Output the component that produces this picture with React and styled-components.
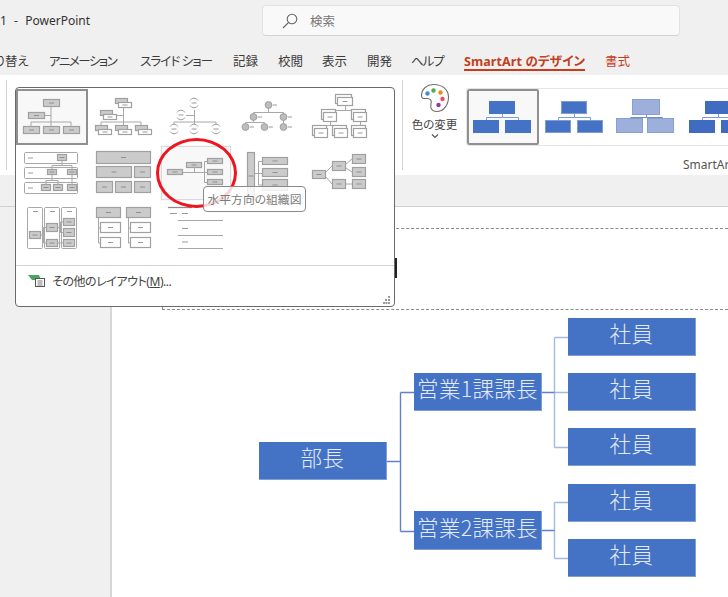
import React from 'react';
import styled, { createGlobalStyle } from 'styled-components';

const GlobalStyle = createGlobalStyle`
  html, body {
    margin: 0;
    padding: 0;
    background: #f0f0f0;
  }
  body {
    font-family: "Noto Sans", "Noto Sans CJK JP", sans-serif;
    font-feature-settings: "palt";
  }
`;

const Page = styled.div`
  position: relative;
  width: 728px;
  height: 597px;
  overflow: hidden;
  background: #f0f0f0;
  display: flex;
  flex-direction: column;
`;

const TitleBar = styled.div`
  height: 42px;
  display: flex;
  align-items: flex-start;
  flex: none;
`;

const AppTitle = styled.div`
  width: 262px;
  flex: none;
  margin-top: 12px;
  font-size: 12px;
  line-height: 18px;
  word-spacing: 0.5px;
  color: #333;
  white-space: pre;
`;

const SearchBox = styled.div`
  margin-top: 5px;
  width: 418px;
  height: 31px;
  box-sizing: border-box;
  background: #f9f9f9;
  border: 1px solid #e2e2e2;
  border-bottom-color: #d2d2d2;
  border-radius: 4px;
  display: flex;
  align-items: center;
  padding-left: 19px;
  gap: 12px;
  font-size: 12.5px;
  color: #777;
`;

const Tabs = styled.div`
  height: 33px;
  flex: none;
  display: flex;
  margin-left: -18px;
  font-size: 12.5px;
  color: #3c3c3c;
`;

const Tab = styled.div`
  width: ${p => p.$w}px;
  flex: none;
  box-sizing: border-box;
  padding-top: 11px;
  white-space: nowrap;
  letter-spacing: ${p => p.$squeeze || 0}px;
  color: ${p => (p.$accent ? '#c43e1c' : 'inherit')};
  font-weight: ${p => (p.$active ? 700 : 400)};
`;

const TabLabel = styled.div`
  width: fit-content;
  height: 18px;
  line-height: 18px;
  box-sizing: border-box;
  border-bottom: ${p => (p.$active ? '2px solid #c43e1c' : 'none')};
`;

const Ribbon = styled.div`
  height: 100px;
  flex: none;
  background: #fff;
  display: flex;
`;

const RibbonDivider = styled.div`
  width: 1px;
  height: 90px;
  margin: 5px 0 0 ${p => p.$left}px;
  background: #d4d4d4;
  flex: none;
`;

const ColorButton = styled.div`
  width: 63px;
  flex: none;
  display: flex;
  flex-direction: column;
  align-items: center;
  padding-top: 8px;
  font-size: 11.5px;
  line-height: 16px;
  color: #444;
`;

const ColorLabel = styled.div`
  margin-top: 4px;
  white-space: nowrap;
`;

const GalleryColumn = styled.div`
  flex: 1;
  min-width: 0;
  padding-top: 13px;
  display: flex;
  flex-direction: column;
`;

const RibbonGallery = styled.div`
  height: 58px;
  box-sizing: border-box;
  border: 1px solid #e4e4e4;
  border-right: none;
  border-radius: 3px 0 0 3px;
  display: flex;
  overflow: hidden;
`;

const RibbonCell = styled.div`
  width: 72px;
  height: 56px;
  flex: none;
  box-sizing: border-box;
  outline: ${p => (p.$selected ? '2px solid #909090' : 'none')};
  outline-offset: -2px;
  background: ${p => (p.$selected ? '#f8f8f8' : '#fff')};
  border-radius: 2px;
  svg { display: block; }
`;

const GroupLabel = styled.div`
  padding: 11px 0 0 217px;
  font-size: 12px;
  line-height: 16px;
  color: #555;
`;

const ViewStrip = styled.div`
  height: 31px;
  flex: none;
  box-sizing: content-box;
  border-bottom: 1px solid #d0d0d0;
`;

const Workspace = styled.div`
  flex: 1;
  display: flex;
`;

const ThumbPane = styled.div`
  width: 110px;
  flex: none;
  border-right: 2px solid #d6d6d6;
`;

const Slide = styled.div`
  flex: 1;
  position: relative;
  background: #fff;
`;

const TitlePlaceholder = styled.div`
  position: absolute;
  left: 50px;
  right: 0;
  top: 21px;
  height: 80px;
  border-top: 1px dashed #8a8a8a;
  border-bottom: 1px dashed #8a8a8a;
  border-left: 1px dashed #8a8a8a;
`;

const TextCaret = styled.div`
  position: absolute;
  left: 232px;
  top: 29px;
  width: 2px;
  height: 20px;
  background: #222;
`;

const Connectors = styled.svg`
  position: absolute;
  left: 0;
  top: 0;
`;

const OrgNode = styled.div`
  position: absolute;
  left: ${p => p.$x - 112}px;
  top: ${p => p.$y - 207}px;
  width: 128px;
  height: ${p => p.$h}px;
  box-sizing: border-box;
  padding-bottom: 8px;
  background: #4472c4;
  border: 1px solid #7e9ed8;
  border-width: 0 1px 1px 0;
  color: #e4ebf8;
  font-family: "Noto Sans CJK JP", sans-serif;
  font-feature-settings: normal;
  font-size: 21.5px;
  font-weight: 300;
  letter-spacing: ${p => p.$spacing}px;
  display: flex;
  align-items: center;
  justify-content: center;
  white-space: nowrap;
`;

const LayoutPopup = styled.div`
  position: absolute;
  left: 15px;
  top: 87px;
  width: 380px;
  height: 220px;
  box-sizing: border-box;
  background: #fff;
  border: 1px solid #6a6a6a;
  border-radius: 4px;
  display: flex;
  flex-direction: column;
`;

const LayoutGrid = styled.div`
  display: grid;
  grid-template-columns: repeat(5, 72px);
  grid-auto-rows: 56px;
  padding: 1px 0 0 0;
  height: 177px;
  box-sizing: border-box;
`;

const LayoutCell = styled.div`
  box-sizing: border-box;
  position: relative;
  background: ${p => (p.$hover ? '#f8f8f8' : p.$selected ? '#f8f8f8' : 'transparent')};
  outline: ${p => (p.$selected ? '2px solid #909090' : p.$hover ? '1px solid #dadada' : 'none')};
  outline-offset: -2px;
  svg { display: block; }
`;

const PopupFooter = styled.div`
  flex: none;
  border-top: 1px solid #d2d2d2;
  height: 41px;
  box-sizing: border-box;
  position: relative;
  display: flex;
  align-items: center;
  padding: 0 0 11px 12px;
  gap: 7px;
  font-size: 12px;
  letter-spacing: -0.45px;
  color: #444;
`;

const Mnemonic = styled.span`
  text-decoration: underline;
`;

const ResizeGrip = styled.svg`
  position: absolute;
  right: 3px;
  bottom: 2px;
`;

const Tooltip = styled.div`
  position: absolute;
  left: 203px;
  top: 186px;
  width: 103px;
  height: 26px;
  box-sizing: border-box;
  background: rgba(255, 255, 255, 0.82);
  border: 1px solid #8a8a8a;
  border-radius: 4px;
  font-size: 11.8px;
  line-height: 24px;
  text-align: center;
  color: #7c7c7c;
  white-space: nowrap;
`;

const RedRing = styled.div`
  position: absolute;
  left: 156px;
  top: 138px;
  width: 81px;
  height: 70px;
  box-sizing: border-box;
  border: 3px solid #f0141e;
  border-radius: 50%;
`;

/* --- drawings --- */

const GRAY = '#cbcbcb';
const EDGE = '#a0a0a0';
const LINE = '#a8a8a8';
const DASH = '#808080';

const Thumb = ({ x, y, children }) => (
  <svg width="72" height="56" viewBox={`${x} ${y} 72 56`}>{children}</svg>
);

const Box = ({ x1, y1, x2, y2, white, noDash }) => {
  const cx = (x1 + x2) / 2;
  const cy = (y1 + y2) / 2;
  return (
    <g>
      <rect x={x1 + 0.5} y={y1 + 0.5} width={x2 - x1 - 1} height={y2 - y1 - 1} fill={white ? '#fff' : GRAY} stroke={EDGE} strokeWidth="1.200" />
      {!noDash && <line x1={cx - 2.5} x2={cx + 2.5} y1={cy} y2={cy} stroke={DASH} strokeWidth="0.8" />}
    </g>
  );
};

const Lines = ({ d, color = LINE, width = 1 }) => <path d={d} fill="none" stroke={color} strokeWidth={width} />;

const Circle = ({ cx, cy, r = 3.4 }) => (
  <g>
    <circle cx={cx} cy={cy} r={r} fill="#bdbdbd" stroke={EDGE} />
    <line x1={cx + r + 1} x2={cx + r + 5} y1={cy} y2={cy} stroke={DASH} strokeWidth="0.8" />
  </g>
);

const ArcNode = ({ cx, cy }) => (
  <g>
    <path d={`M${cx - 4} ${cy - 2.5}A4.6 4.6 0 0 1 ${cx + 4} ${cy - 2.5}M${cx - 4} ${cy + 2.5}A4.6 4.6 0 0 0 ${cx + 4} ${cy + 2.5}`} fill="none" stroke={EDGE} />
    <line x1={cx - 2.5} x2={cx + 2.5} y1={cy} y2={cy} stroke={DASH} strokeWidth="0.8" />
  </g>
);

const PairBox = ({ x, y, w = 13, h = 6 }) => (
  <g>
    <Box x1={x} y1={y} x2={x + w} y2={y + h} noDash />
    <Box x1={x + 3} y1={y + 4} x2={x + w + 4} y2={y + h + 4} white />
  </g>
);

const StackBox = ({ x, y, w = 15, h = 10 }) => (
  <g>
    <rect x={x - 1.5} y={y - 2.5} width={w} height={h} fill="#fff" stroke={EDGE} strokeWidth="1.200" />
    <Box x1={x} y1={y} x2={x + w} y2={y + h} white />
  </g>
);

const layouts = [
  <Thumb x={16} y={89} key="a">
    <Lines d="M51 107V122M45 115.5H51M31 126V122H71V126M51 122V126" />
    <Box x1={43} y1={99} x2={60} y2={107} />
    <Box x1={28} y1={112} x2={45} y2={119} />
    <Box x1={23} y1={126} x2={40} y2={134} />
    <Box x1={43} y1={126} x2={60} y2={134} />
    <Box x1={63} y1={126} x2={80} y2={134} />
  </Thumb>,
  <Thumb x={88} y={89} key="b">
    <Lines d="M123.500 106V122M114 115.500H123.500M101 125V122H141V125M123.500 122V125" />
    <PairBox x={115} y={98} />
    <PairBox x={100} y={110} />
    <PairBox x={95} y={125} />
    <PairBox x={115} y={125} />
    <PairBox x={135} y={125} />
  </Thumb>,
  <Thumb x={160} y={89} key="c">
    <Lines d="M194.500 110V122M186 115.500H194.500M174 124V122H216V124M194.500 122V124" />
    <ArcNode cx={194} cy={103} />
    <ArcNode cx={181} cy={115} />
    <ArcNode cx={174} cy={129} />
    <ArcNode cx={194} cy={129} />
    <ArcNode cx={216} cy={129} />
  </Thumb>,
  <Thumb x={232} y={89} key="d">
    <Lines d="M268.500 108V112.500M253.500 117V112.500H283.500V127M245.500 127V122.500H264.500V127M253.500 117V122.500" />
    <Circle cx={268.500} cy={105} />
    <Circle cx={253.500} cy={117} />
    <Circle cx={283.500} cy={117} />
    <Circle cx={245.500} cy={127} />
    <Circle cx={264.500} cy={127} />
    <Circle cx={283.500} cy={127} />
  </Thumb>,
  <Thumb x={304} y={89} key="e">
    <Lines d="M345.500 106V110.500M330.500 112V110.500H360.500V112M330.500 122V125.500M321 128V125.500H340V128M360.500 122V128" />
    <StackBox x={337} y={97} w={16} h={9} />
    <StackBox x={323} y={112} w={14} />
    <StackBox x={353} y={112} w={14} />
    <StackBox x={314} y={128} w={14} />
    <StackBox x={334} y={128} w={14} />
    <StackBox x={353} y={128} w={14} />
  </Thumb>,
  <Thumb x={16} y={145} key="f">
    {[152, 167, 182].map(y => (
      <g key={y}>
        <rect x="24.500" y={y + 0.5} width="53" height="11" fill="#fff" stroke={LINE} rx="1" />
        <line x1="28" x2="33" y1={y + 6} y2={y + 6} stroke={DASH} strokeWidth="0.8" />
      </g>
    ))}
    <Lines d="M62 161V165.500M52 169V165.500H72V169M52 175V180.500M46 184V180.500H58V184M72 175V184" />
    <Box x1={57} y1={154} x2={67} y2={161} />
    <Box x1={47} y1={169} x2={57} y2={175} />
    <Box x1={67} y1={169} x2={77} y2={175} />
    <Box x1={41} y1={184} x2={51} y2={191} />
    <Box x1={53} y1={184} x2={63} y2={191} />
    <Box x1={67} y1={184} x2={77} y2={191} />
  </Thumb>,
  <Thumb x={88} y={145} key="g">
    <Box x1={96} y1={151} x2={151} y2={164} />
    <Box x1={96} y1={166} x2={132} y2={178} />
    <Box x1={134} y1={166} x2={151} y2={178} />
    <Box x1={96} y1={181} x2={113} y2={193} />
    <Box x1={115} y1={181} x2={132} y2={193} />
    <Box x1={134} y1={181} x2={151} y2={193} />
  </Thumb>,
  <Thumb x={160} y={145} key="h">
    <Lines d="M183 172.500H207M194.500 168V172.500M204.500 161.500V182.500M204.500 161.500H207M204.500 182.500H207" />
    <Box x1={167} y1={169} x2={183} y2={175} />
    <Box x1={186} y1={162} x2={202} y2={168} />
    <Box x1={207} y1={158} x2={223} y2={164} />
    <Box x1={207} y1={169} x2={223} y2={175} />
    <Box x1={207} y1={179} x2={223} y2={185} />
  </Thumb>,
  <Thumb x={232} y={145} key="i">
    <Lines d="M255 173.500H262M258.500 161.500V185M258.500 161.500H262M258.500 185H262" />
    <Box x1={247} y1={152} x2={255} y2={200} />
    <Box x1={262} y1={157} x2={288} y2={165} />
    <Box x1={262} y1={168} x2={288} y2={177} />
    <Box x1={262} y1={179} x2={288} y2={191} />
  </Thumb>,
  <Thumb x={304} y={145} key="j">
    <Lines d="M326 172L332 166M326 177L332 184M346 164L352 159M346 168L352 172M346 184H352" />
    <Box x1={312} y1={170} x2={326} y2={179} />
    <Box x1={332} y1={161} x2={346} y2={171} />
    <Box x1={332} y1={179} x2={346} y2={189} />
    <Box x1={352} y1={154} x2={366} y2={164} />
    <Box x1={352} y1={167} x2={366} y2={177} />
    <Box x1={352} y1={179} x2={366} y2={189} />
  </Thumb>,
  <Thumb x={16} y={201} key="k">
    {[27, 44, 61].map(x => (
      <g key={x}>
        <rect x={x + 0.5} y="207.500" width="15" height="41" fill="#fff" stroke={LINE} rx="1" />
        <line x1={x + 6} x2={x + 11} y1="211.500" y2="211.500" stroke={DASH} strokeWidth="0.8" />
      </g>
    ))}
    <Lines d="M41 235H43.500V227.500H46M43.500 235V243H46M58 227.500H60.500V222H63M60.500 227.500V232.500H63M58 243H63" />
    <Box x1={29} y1={231} x2={41} y2={239} />
    <Box x1={46} y1={223} x2={58} y2={232} />
    <Box x1={46} y1={239} x2={58} y2={247} />
    <Box x1={63} y1={218} x2={75} y2={226} />
    <Box x1={63} y1={228} x2={75} y2={237} />
    <Box x1={63} y1={239} x2={75} y2={247} />
  </Thumb>,
  <Thumb x={88} y={201} key="l">
    <Lines d="M98.500 218V243H100M98.500 228H100M128.500 218V243H130M128.500 228H130" />
    <Box x1={96} y1={207} x2={121} y2={218} />
    <Box x1={126} y1={207} x2={151} y2={218} />
    <Box x1={100} y1={222} x2={121} y2={233} white />
    <Box x1={100} y1={237} x2={121} y2={248} white />
    <Box x1={130} y1={222} x2={151} y2={233} white />
    <Box x1={130} y1={237} x2={151} y2={248} white />
  </Thumb>,
  <Thumb x={160} y={201} key="m">
    <Lines d="M168 207.500H192" color="#8c8c8c" width="1.300" />
    <Lines d="M170 213.500H177M182 213.500H188M182 228.500H188M182 242H188" color={DASH} width="0.800" />
    <Lines d="M178 220.500H223M178 235.500H223M178 248.500H223" />
  </Thumb>,
];

const MiniOrg = ({ fill, edge, link, top = [22, 12, 26, 13], kids = [6, 31, 26, 13], step = 32 }) => (
  <svg width="72" height="56" viewBox="0 0 72 56">
    <path d="M35.500 25V28.500H19.500V32M35.500 28.500H51.500V32" fill="none" stroke={link} />
    <rect x={top[0] + 0.5} y={top[1] + 0.5} width={top[2] - 1} height={top[3] - 1} fill={fill} stroke={edge} />
    <rect x={kids[0] + 0.5} y={kids[1] + 0.5} width={kids[2] - 1} height={kids[3] - 1} fill={fill} stroke={edge} />
    <rect x={kids[0] + step + 0.5} y={kids[1] + 0.5} width={kids[2] - 1} height={kids[3] - 1} fill={fill} stroke={edge} />
  </svg>
);

const SearchIcon = () => (
  <svg width="16" height="16" viewBox="0 0 16 16" fill="none" stroke="#666" strokeWidth="1.100">
    <circle cx="10" cy="6" r="4.800" />
    <path d="M6.500 9.500L1 15" />
  </svg>
);

const PaletteIcon = () => (
  <svg width="30" height="30" viewBox="0 0 30 30">
    <path d="M14 1.500C6.500 1.500 1.500 6.500 1.500 12.500C1.500 16 4.500 15.500 7 15.500C10.500 15.500 12 17.500 11 21C10 24.500 11.500 28.500 16.500 28.500C24 28.500 28.500 21.500 28.500 14C28.500 6.500 22 1.500 14 1.500Z" fill="#fff" stroke="#6e6e6e" strokeWidth="1.100" />
    <circle cx="7.500" cy="10.500" r="2.200" fill="#3f8fd8" />
    <circle cx="13.500" cy="7.500" r="2.200" fill="#4caf50" />
    <circle cx="20.500" cy="9.500" r="2.200" fill="#ee8a1d" />
    <circle cx="22.500" cy="16" r="2.200" fill="#ee4b5a" />
    <circle cx="18.500" cy="22" r="2.200" fill="#8e3aa8" />
  </svg>
);

const Chevron = () => (
  <svg width="8" height="6" viewBox="0 0 8 6" fill="none" stroke="#555" strokeWidth="1.200">
    <path d="M1 1.500L4 4.500L7 1.500" />
  </svg>
);

const MoreLayoutsIcon = () => (
  <svg width="17" height="13" viewBox="0 0 17 13">
    <path d="M0 1H11L13 6H4Z" fill="#4aa564" />
    <rect x="7.500" y="4.500" width="9" height="8" fill="#fff" stroke="#555" />
    <path d="M9.500 7H14.500M9.500 9H14.500M9.500 11H14.500" stroke="#555" strokeWidth="0.800" />
  </svg>
);

const chartLines = [
  { d: 'M387 461.500H400.500M400.500 392.500V531.500M400.500 392.500H414M400.500 531.500H414', color: '#5f82c4' },
  { d: 'M554.500 337.500V447.500M554.500 337.500H568M554.500 392.500H568M554.500 447.500H568', color: '#a3b9e0' },
  { d: 'M554.500 502.500V558.500M554.500 502.500H568M554.500 558.500H568', color: '#a3b9e0' },
  { d: 'M542 392.500H554.500M542 530.500H554.500', color: '#5f82c4' },
];

const tabs = [
  { label: '切り替え', w: 67 },
  { label: 'アニメーション', w: 91, squeeze: -1.5 },
  { label: 'スライド ショー', w: 93, squeeze: -0.9 },
  { label: '記録', w: 45 },
  { label: '校閲', w: 44 },
  { label: '表示', w: 45 },
  { label: '開発', w: 44 },
  { label: 'ヘルプ', w: 53, squeeze: -1 },
  { label: 'SmartArt のデザイン', w: 141, accent: true, active: true, squeeze: 0.1 },
  { label: '書式', w: 40, accent: true },
];

const nodes = [
  { text: '部長', x: 259, y: 442, h: 38, spacing: 0.5 },
  { text: '営業1課課長', x: 414, y: 373, h: 38, spacing: 0.3 },
  { text: '営業2課課長', x: 414, y: 511, h: 39, spacing: 0.3 },
  { text: '社員', x: 568, y: 318, h: 38, spacing: 0.5 },
  { text: '社員', x: 568, y: 373, h: 38, spacing: 0.5 },
  { text: '社員', x: 568, y: 428, h: 38, spacing: 0.5 },
  { text: '社員', x: 568, y: 484, h: 38, spacing: 0.5 },
  { text: '社員', x: 568, y: 539, h: 38, spacing: 0.5 },
];

export default function App() {
  return (
    <Page>
      <GlobalStyle />
      <TitleBar>
        <AppTitle>{'1  -  PowerPoint'}</AppTitle>
        <SearchBox>
          <SearchIcon />
          <span>検索</span>
        </SearchBox>
      </TitleBar>
      <Tabs>
        {tabs.map(t => (
          <Tab key={t.label} $w={t.w} $accent={t.accent} $active={t.active} $squeeze={t.squeeze}>
            <TabLabel $active={t.active}>{t.label}</TabLabel>
          </Tab>
        ))}
      </Tabs>
      <Ribbon>
        <RibbonDivider $left={6} />
        <RibbonDivider $left={395} />
        <ColorButton>
          <PaletteIcon />
          <ColorLabel>色の変更</ColorLabel>
          <Chevron />
        </ColorButton>
        <GalleryColumn>
          <RibbonGallery>
            <RibbonCell $selected>
              <MiniOrg fill="#4472c4" edge="#4472c4" link="#7f9bd1" />
            </RibbonCell>
            <RibbonCell>
              <MiniOrg fill="#4472c4" edge="#7d9cd6" link="#7f9bd1" />
            </RibbonCell>
            <RibbonCell>
              <MiniOrg fill="#9db0dc" edge="#8b9fcf" link="#6f8cc6" top={[21, 10, 28, 16]} kids={[5, 29, 27, 15]} step={31} />
            </RibbonCell>
            <RibbonCell>
              <MiniOrg fill="#3f6cc0" edge="#3f6cc0" link="#7f9bd1" />
            </RibbonCell>
          </RibbonGallery>
          <GroupLabel>SmartArt</GroupLabel>
        </GalleryColumn>
      </Ribbon>
      <ViewStrip />
      <Workspace>
        <ThumbPane />
        <Slide>
          <TitlePlaceholder>
            <TextCaret />
          </TitlePlaceholder>
          <Connectors width="616" height="390" viewBox="112 207 616 390">
            {chartLines.map(l => (
              <path key={l.d} d={l.d} fill="none" stroke={l.color} strokeWidth="1.400" />
            ))}
          </Connectors>
          {nodes.map(n => (
            <OrgNode key={`${n.x}-${n.y}`} $x={n.x} $y={n.y} $h={n.h} $spacing={n.spacing}>
              {n.text}
            </OrgNode>
          ))}
        </Slide>
      </Workspace>
      <LayoutPopup>
        <LayoutGrid>
          {layouts.map((thumb, i) => (
            <LayoutCell key={i} $selected={i === 0} $hover={i === 7}>
              {thumb}
            </LayoutCell>
          ))}
        </LayoutGrid>
        <PopupFooter>
          <MoreLayoutsIcon />
          <span>
            その他のレイアウト(<Mnemonic>M</Mnemonic>)...
          </span>
          <ResizeGrip width="8" height="8" viewBox="0 0 8 8" fill="#9a9a9a">
            <rect x="5" y="0" width="2" height="2" />
            <rect x="2" y="3" width="2" height="2" />
            <rect x="5" y="3" width="2" height="2" />
            <rect x="0" y="6" width="2" height="2" />
            <rect x="2.500" y="6" width="2" height="2" />
            <rect x="5" y="6" width="2" height="2" />
          </ResizeGrip>
        </PopupFooter>
      </LayoutPopup>
      <RedRing />
      <Tooltip>水平方向の組織図</Tooltip>
    </Page>
  );
}
